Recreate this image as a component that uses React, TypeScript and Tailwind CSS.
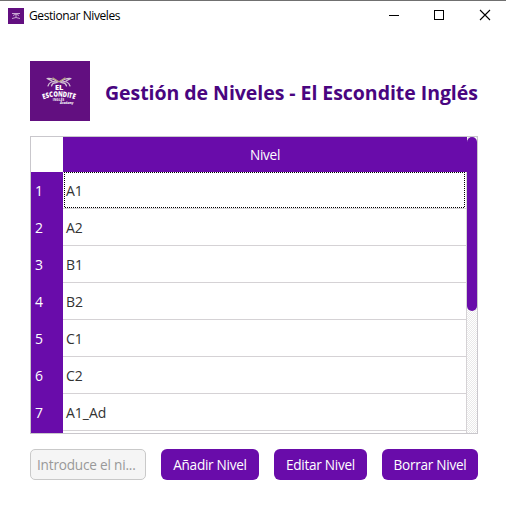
const levels = ['A1', 'A2', 'B1', 'B2', 'C1', 'C2', 'A1_Ad'];

function Logo() {
  return (
    <svg className="h-[60px] w-[60px] shrink-0" viewBox="0 0 60 60">
      <rect width="60" height="60" fill="#620f80" />
      <g fill="none" stroke="#d5c5d6" strokeWidth="1.2" strokeLinecap="round" strokeLinejoin="round">
        <path d="M28 21C24 18 21 17 17 17.5L22 20" />
        <path d="M27 21.5C23 19.5 19 21 18 25" />
        <path d="M26 22C23.5 21.5 22 23 21.5 25" />
        <path d="M30 21C34 18 37 17 41 17.5L36 20" />
        <path d="M31 21.5C35 19.5 39 21 40 25" />
        <path d="M32 22C34.5 21.5 36 23 36.5 25" />
        <path d="M23 17L28.5 20.5M35 17L29.5 20.5" stroke="#b7a77c" />
      </g>
      <g fill="#fff" fontFamily="'Open Sans', sans-serif" textAnchor="middle">
        <text x="29.2" y="28.8" fontSize="7.5" fontWeight="800">EL</text>
        <g fontSize="7.4" fontWeight="800">
          <text transform="translate(14.8 38) rotate(-18) scale(.8 1)">E</text>
          <text transform="translate(18 36.9) rotate(-13) scale(.8 1)">S</text>
          <text transform="translate(21.5 36.1) rotate(-8) scale(.8 1)">C</text>
          <text transform="translate(25.7 35.6) rotate(-3) scale(.78 1)">O</text>
          <text transform="translate(30.3 35.6) rotate(2) scale(.76 1)">N</text>
          <text transform="translate(34.7 36) rotate(6) scale(.78 1)">D</text>
          <text transform="translate(37.8 36.4) rotate(10) scale(.8 1)">I</text>
          <text transform="translate(40 36.9) rotate(13) scale(.8 1)">T</text>
          <text transform="translate(43.2 37.7) rotate(17) scale(.8 1)">E</text>
        </g>
        <text x="28.5" y="39.5" fontSize="3" fontWeight="700" textLength="11.5">INGLÉS</text>
        <text x="36.7" y="43" fontSize="3.2" fontWeight="700" fontStyle="italic" textLength="13.3" lengthAdjust="spacingAndGlyphs">Academy</text>
      </g>
    </svg>
  );
}

function TitleBar() {
  return (
    <header className="flex h-[30px] items-center border-t border-[#707070] pl-2">
      <svg className="h-4 w-4" viewBox="0 0 16 16">
        <rect width="16" height="16" fill="#620f80" />
        <path d="M4 5.5h8M5 7.5l3-1.5 3 1.5M4 10.5q4-2 8 0M8 6v3" fill="none" stroke="#c9a9d4" strokeWidth="1" />
      </svg>
      <h1 className="ml-[5px] pt-px text-[12px] leading-4 tracking-[-0.41px] text-black">Gestionar Niveles</h1>
      <svg className="ml-auto h-[29px] w-[118px]" viewBox="388 1 118 29" fill="none" stroke="#000" shapeRendering="crispEdges">
        <path d="M389 15.5h10M434.5 10.5h9v9h-9z" />
        <path d="M480 10l10 10M490 10l-10 10" shapeRendering="auto" strokeWidth="1.1" />
      </svg>
    </header>
  );
}

const button = 'h-[31px] shrink-0 rounded-[6px] bg-[#690caa] text-center text-[13.6px] leading-[31px] tracking-[-0.28px] text-white whitespace-nowrap';

export default function App() {
  return (
    <div className="h-[510px] w-[506px] overflow-hidden bg-white font-['Open_Sans','Noto_Sans',sans-serif]">
      <TitleBar />
      <main className="px-[30px] pt-[31px]">
        <div className="mr-[-2px] flex items-center">
          <Logo />
          <h2 className="ml-[15px] pt-[3px] text-[19.5px] leading-6 font-bold tracking-[-0.05px] whitespace-nowrap text-[#490580]">
            Gestión de Niveles - El Escondite Inglés
          </h2>
        </div>

        <section className="mt-[15px] flex h-[298px] w-[448px] overflow-hidden border border-[#c9c7cc] text-[14px]">
          <div className="w-8 shrink-0 bg-[#690caa] text-white">
            <div className="h-[35px] bg-white" />
            {levels.map((level, i) => (
              <div key={level} className="h-[37px] pl-1 leading-[38px]">{i + 1}</div>
            ))}
          </div>
          <div className="w-[404px] shrink-0">
            <div className="h-[35px] bg-[#690caa] text-center text-[13.6px] leading-[36px] tracking-[-0.28px] text-white">Nivel</div>
            {levels.map((level, i) => (
              <div key={level} className="h-[37px] border-r border-b border-[#d5d2d5] pr-[1px] pl-px">
                <div className="relative h-9 pl-[2px] leading-[38px] text-[#333]">
                  {level}
                  {i === 0 && (
                    <svg className="absolute inset-0 h-9 w-[401px]" viewBox="0 0 401 36" fill="none" stroke="#000" strokeDasharray="1 1">
                      <path d="M0 .5H401M1 35.5H401M.5 0V36M400.5 0V36" />
                    </svg>
                  )}
                </div>
              </div>
            ))}
            <div className="h-1 border-r border-[#d5d2d5]" />
          </div>
          <div className="h-full w-[10px] bg-[conic-gradient(#e9e9e9_25%,#fff_25%_50%,#e9e9e9_50%_75%,#fff_75%)] bg-size-[2px_2px]">
            <div className="h-[174px] rounded-[5px] bg-[#690caa]" />
          </div>
        </section>

        <div className="mt-[15px] mr-[-2px] flex">
          <input
            className="h-[31px] w-[116px] shrink-0 rounded-[5px] border border-[#c9c9c9] bg-[#f5f5f5] px-[6px] text-[13.6px] tracking-[-0.2px] text-[#999] placeholder:text-[#999]"
            placeholder="Introduce el ni..."
          />
          <button className={`${button} ml-[15px] w-[98px]`}>Añadir Nivel</button>
          <button className={`${button} ml-[15px] w-[93px]`}>Editar Nivel</button>
          <button className={`${button} ml-[15px] w-[96px]`}>Borrar Nivel</button>
        </div>
      </main>
    </div>
  );
}
